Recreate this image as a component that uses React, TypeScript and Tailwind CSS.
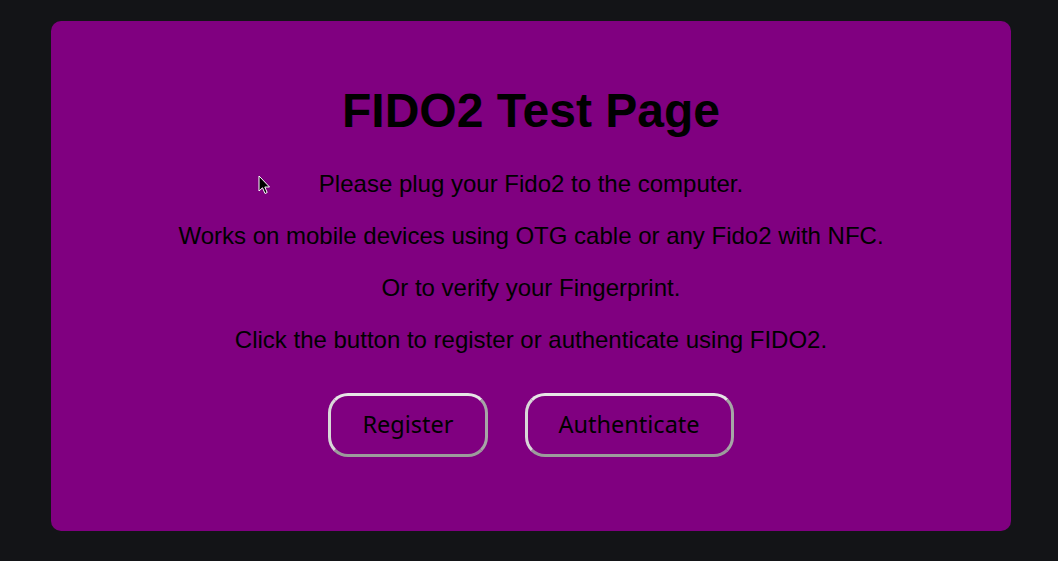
import React from 'react';

const lines = [
  'Please plug your Fido2 to the computer.',
  'Works on mobile devices using OTG cable or any Fido2 with NFC.',
  'Or to verify your Fingerprint.',
  'Click the button to register or authenticate using FIDO2.',
];

function FidoButton({ label }: { label: string }) {
  return (
    <button
      className="h-[64px] px-[31px] rounded-[20px] border-[3px] border-t-[#e6e6e6] border-l-[#d8d8d8] border-r-[#a6a6a6] border-b-[#9c9c9c] bg-transparent text-[23.5px] text-black"
      style={{ fontFamily: '"Noto Sans", "Open Sans", sans-serif' }}
    >
      {label}
    </button>
  );
}

export default function App() {
  return (
    <div className="relative w-full h-[561px] bg-[#131417] pt-[21px] pl-[51px]">
      <div
        className="w-[960px] h-[510px] bg-[#800080] rounded-[10px] flex flex-col items-center pt-[62px] text-black"
        style={{ fontFamily: '"Liberation Sans", Arial, sans-serif' }}
      >
        <h1 className="text-[48px] leading-[56px] font-bold">FIDO2 Test Page</h1>
        <div className="mt-[31px] flex flex-col items-center gap-[24px]">
          {lines.map((line) => (
            <p key={line} className="text-[24px] leading-[28px]">
              {line}
            </p>
          ))}
        </div>
        <div className="mt-[39px] flex gap-[37px]">
          <FidoButton label="Register" />
          <FidoButton label="Authenticate" />
        </div>
      </div>
      {/* mouse pointer from the screenshot */}
      <svg className="absolute left-[258px] top-[175px]" width="13" height="20" viewBox="0 0 13 20">
        <path
          d="M1 1 L1 16 L4.5 12.8 L7 18.5 L9.2 17.5 L6.8 12 L11.5 12 Z"
          fill="#000"
          stroke="#fff"
          strokeWidth="1"
          strokeLinejoin="round"
        />
      </svg>
    </div>
  );
}
